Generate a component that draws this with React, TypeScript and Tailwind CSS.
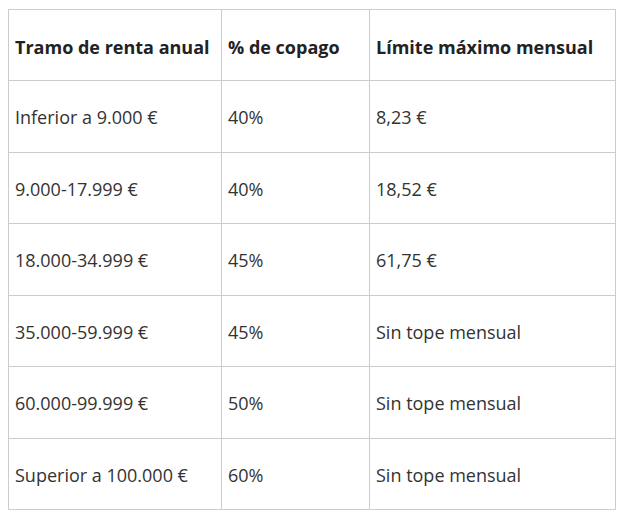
const rows = [
  ["Inferior a 9.000 €", "40%", "8,23 €"],
  ["9.000-17.999 €", "40%", "18,52 €"],
  ["18.000-34.999 €", "45%", "61,75 €"],
  ["35.000-59.999 €", "45%", "Sin tope mensual"],
  ["60.000-99.999 €", "50%", "Sin tope mensual"],
  ["Superior a 100.000 €", "60%", "Sin tope mensual"],
];

export default function App() {
  return (
    <div className="min-h-screen bg-white pl-2 pt-[9px] font-['Open_Sans',sans-serif] text-[18px] text-[#333]">
      <table className="w-[607px] table-fixed border-collapse">
        <colgroup>
          <col className="w-[213px]" />
          <col className="w-[148px]" />
          <col className="w-[246px]" />
        </colgroup>
        <thead>
          <tr className="h-[71px]">
            <th className="border border-[#ccc] px-[6px] pt-[4px] text-left font-bold text-[#222]">Tramo de renta anual</th>
            <th className="border border-[#ccc] px-[6px] pt-[4px] text-left font-bold text-[#222]">% de copago</th>
            <th className="border border-[#ccc] px-[6px] pt-[4px] text-left font-bold text-[#222]">Límite máximo mensual</th>
          </tr>
        </thead>
        <tbody>
          {rows.map((r) => (
            <tr key={r[0]} className="h-[71.5px]">
              {r.map((c, i) => (
                <td key={i} className="border border-[#ccc] px-[6px] pt-[3px]">
                  {c}
                </td>
              ))}
            </tr>
          ))}
        </tbody>
      </table>
    </div>
  );
}
